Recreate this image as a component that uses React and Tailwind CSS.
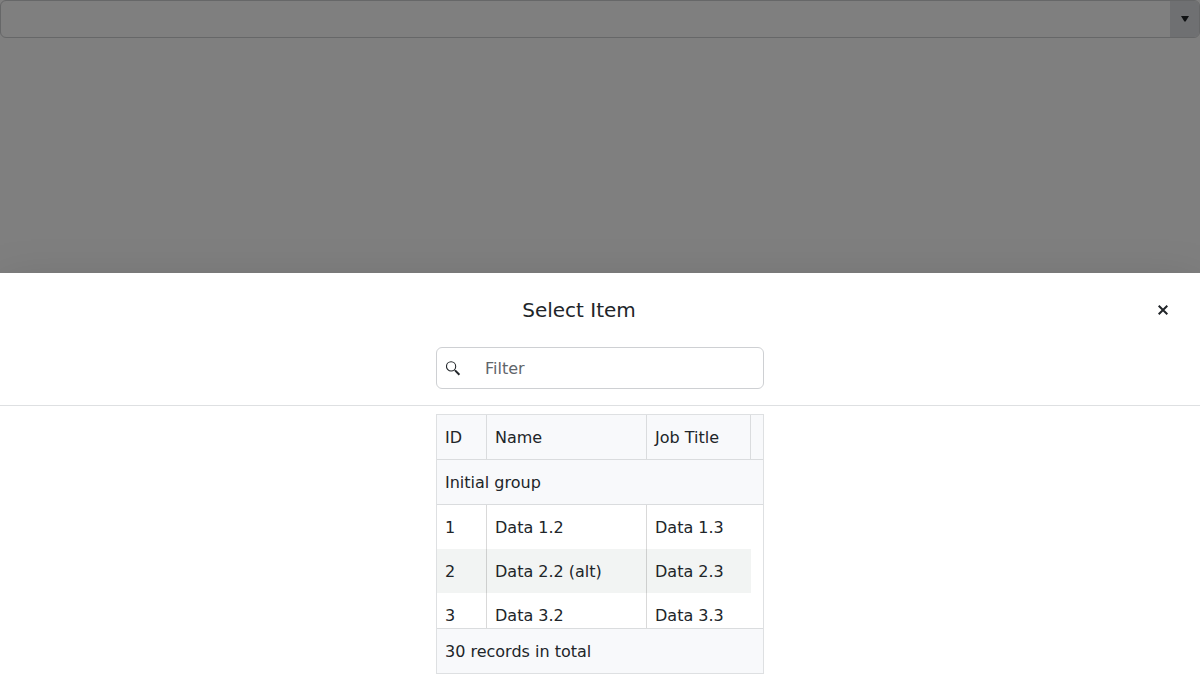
const rows = [
  { id: "1", name: "Data 1.2", title: "Data 1.3" },
  { id: "2", name: "Data 2.2 (alt)", title: "Data 2.3", alt: true },
  { id: "3", name: "Data 3.2", title: "Data 3.3" },
];

function ComboBox() {
  return (
    <div className="flex h-[38px] overflow-hidden rounded-md border border-[#666768]">
      <div className="flex-1" />
      <div className="flex w-[29px] items-center justify-center bg-[#6f7072]">
        <svg width="8" height="6" viewBox="0 0 8 6" fill="#101214">
          <path d="M0 0h8L4.6 5.6H3.4z" />
        </svg>
      </div>
    </div>
  );
}

function SheetHeader() {
  return (
    <header className="border-b border-[#dee0e2] pb-4">
      <div className="flex h-[74px] items-center">
        <h2 className="flex-1 text-center text-xl leading-6">Select Item</h2>
        <button className="mr-[32px] flex w-[10px] items-center justify-center" aria-label="Close">
          <svg width="10" height="10" viewBox="0 0 10 10" stroke="#212529" strokeWidth="2" fill="none">
            <path d="M.7.7l8.6 8.6M9.3.7L.7 9.3" />
          </svg>
        </button>
      </div>
      <div className="mx-auto flex h-[42px] w-[328px] items-center rounded-md border border-[#ced0d3] pl-[9px]">
        <svg width="15" height="15" viewBox="0 0 15 15" fill="none" stroke="#212529">
          <circle cx="5.1" cy="5.4" r="4.6" strokeWidth="1.1" />
          <path d="M8.4 8.7l1.6 1.6" strokeWidth="1.1" />
          <path d="M9.3 9.6l4.1 4.1" strokeWidth="2" />
        </svg>
        <span className="ml-[24px] pt-0.5 text-[#5f656a]">Filter</span>
      </div>
    </header>
  );
}

function DataTable() {
  return (
    <div className="mx-auto mt-2 flex h-[260px] w-[328px] flex-col border border-[#dee0e2]">
      <div className="flex h-[45px] shrink-0 items-stretch border-b border-[#dadcde] bg-[#f8f9fb] leading-[46px]">
        <div className="w-[50px] border-r border-[#dadcde] pl-2">ID</div>
        <div className="w-[160px] border-r border-[#dadcde] pl-2">Name</div>
        <div className="w-[104px] border-r border-[#dadcde] pl-2">Job Title</div>
      </div>
      <div className="h-[45px] shrink-0 border-b border-[#dadcde] bg-[#f8f9fb] pl-2 leading-[46px]">
        Initial group
      </div>
      <div className="min-h-0 flex-1 overflow-hidden">
        {rows.map((row) => (
          <div
            key={row.id}
            className={`flex h-[44px] w-[314px] leading-[46px] ${row.alt ? "bg-[#f2f4f3]" : ""}`}
          >
            <div className="w-[50px] border-r border-black/15 pl-2">{row.id}</div>
            <div className="w-[160px] border-r border-black/15 pl-2">{row.name}</div>
            <div className="w-[104px] pl-2">{row.title}</div>
          </div>
        ))}
      </div>
      <div className="h-[45px] shrink-0 border-t border-[#dadcde] bg-[#f8f9fb] pl-2 leading-[46px]">
        30 records in total
      </div>
    </div>
  );
}

export default function App() {
  return (
    <div className="flex h-[682px] flex-col overflow-hidden bg-[#7f7f7f] font-['DejaVu_Sans',sans-serif] text-base text-[#212529]">
      <div className="h-[273px] shrink-0">
        <ComboBox />
      </div>
      <section className="flex-1 bg-white shadow-[0_16px_48px_rgba(0,0,0,0.175)]">
        <SheetHeader />
        <DataTable />
      </section>
    </div>
  );
}
